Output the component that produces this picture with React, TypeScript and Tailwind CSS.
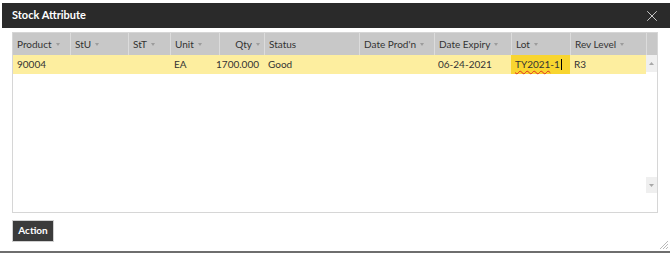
import { X } from "lucide-react";

type Col = { label: string; width: string; align?: "right" };

const columns: Col[] = [
  { label: "Product", width: "w-[57px]" },
  { label: "StU", width: "w-[58px]" },
  { label: "StT", width: "w-[42px]" },
  { label: "Unit", width: "w-[49px]" },
  { label: "Qty", width: "w-[45px]", align: "right" },
  { label: "Status", width: "w-[95px]" },
  { label: "Date Prod'n", width: "w-[75px]" },
  { label: "Date Expiry", width: "w-[77px]" },
  { label: "Lot", width: "w-[59px]" },
  { label: "Rev Level", width: "w-[76px]" },
];

const row = ["90004", "", "", "EA", "1700.000", "Good", "", "06-24-2021", "LOT", "R3"];

function SortMark() {
  return (
    <svg width="4" height="3" viewBox="0 0 4 3" className="ml-[4px] shrink-0">
      <path d="M0 0 L4 0 L2 3 Z" fill="#9c9c9c" />
    </svg>
  );
}

export default function App() {
  return (
    <div
      className="w-[670px] h-[253px] bg-white pt-[3px] pl-[2px] flex flex-col border-b-[2px] border-[#6e6e6e] relative"
      style={{ fontFamily: "Lato, 'Open Sans', sans-serif" }}
    >
      {/* title bar */}
      <div className="h-[25px] bg-[#2a2a2a] flex items-center justify-between pl-[10px] pr-[9px] shrink-0">
        <span className="text-white text-[11px] font-bold">Stock Attribute</span>
        <X className="w-[18px] h-[18px] text-[#d8d8d8]" strokeWidth={1.2} />
      </div>

      {/* grid */}
      <div className="ml-[10px] mt-[4px] w-[646px] h-[181px] border border-[#d6d6d6] flex flex-col shrink-0">
        <div className="flex h-[22px] bg-[#c8c8c8] text-[10px] text-[#333] whitespace-nowrap">
          {columns.map((c, i) => (
            <div
              key={c.label}
              className={`${c.width} shrink-0 flex items-center px-[4px] ${
                c.align === "right" ? "justify-end" : ""
              } ${i > 0 ? "border-l border-[#dcdcdc]" : ""}`}
            >
              <span>{c.label}</span>
              {c.label !== "Status" && <SortMark />}
            </div>
          ))}
          <div className="flex-1 border-l border-[#dcdcdc]" />
        </div>

        <div className="flex flex-1">
          <div className="flex-1">
            <div className="flex h-[19px] bg-[#fdee9f] text-[10px] text-[#333] whitespace-nowrap">
              {columns.map((c, i) => (
                <div
                  key={c.label}
                  className={`${c.width} shrink-0 flex items-center px-[4px] ${
                    c.align === "right" ? "justify-end pr-[5px]" : ""
                  } ${row[i] === "LOT" ? "bg-[#f8d530]" : ""}`}
                >
                  {row[i] === "LOT" ? (
                    <span className="flex items-center">
                      <span className="underline decoration-wavy decoration-[#e0301e] decoration-[1px] underline-offset-2">
                        TY2021
                      </span>
                      <span>-1</span>
                      <span className="w-px h-[11px] bg-black ml-px" />
                    </span>
                  ) : (
                    row[i]
                  )}
                </div>
              ))}
            </div>
          </div>
          <div className="w-[11px] flex flex-col justify-between pb-[19px]">
            <div className="h-[17px] bg-[#efefef] flex items-center justify-center">
              <svg width="5" height="3" viewBox="0 0 5 3">
                <path d="M0 3 L5 3 L2.5 0 Z" fill="#a8a8a8" />
              </svg>
            </div>
            <div className="h-[16px] bg-[#efefef] flex items-center justify-center">
              <svg width="5" height="3" viewBox="0 0 5 3">
                <path d="M0 0 L5 0 L2.5 3 Z" fill="#a8a8a8" />
              </svg>
            </div>
          </div>
        </div>
      </div>

      {/* footer */}
      <div className="ml-[10px] mt-[3px]">
        <button className="h-[22px] w-[42px] bg-[#3b3b3b] border border-[#d0d0d0] text-white text-[10px] font-bold">
          Action
        </button>
      </div>

      {/* resize grip */}
      <svg width="9" height="9" viewBox="0 0 9 9" className="absolute right-[2px] bottom-[2px]">
        <path d="M9 1 L1 9 M9 4 L4 9 M9 7 L7 9" stroke="#a8a8a8" strokeWidth="0.8" />
      </svg>
    </div>
  );
}
